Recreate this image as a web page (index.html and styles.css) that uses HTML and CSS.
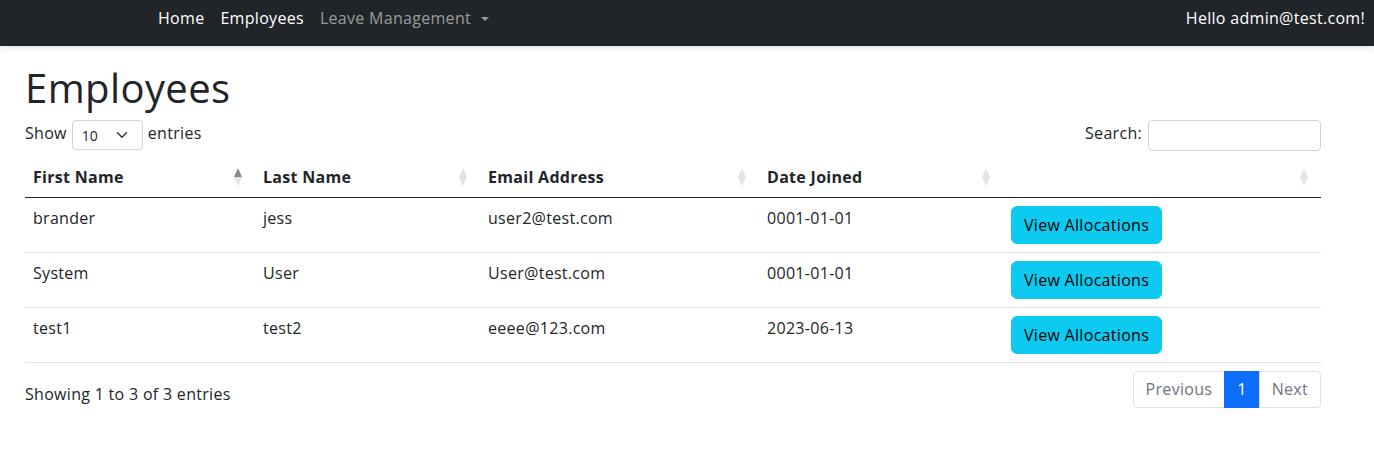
FILE: index.html
```html
<!DOCTYPE html>
<html lang="en">
<head>
<meta charset="utf-8">
<title>Employees</title>
<link rel="stylesheet" href="styles.css">
</head>
<body>
<header class="navbar">
  <nav class="nav-left">
    <a class="nav-link active" href="#">Home</a>
    <a class="nav-link active" href="#">Employees</a>
    <a class="nav-link muted" href="#">Leave Management <span class="caret"></span></a>
  </nav>
  <div class="greeting">Hello admin@test.com!</div>
</header>
<main class="container">
  <h1 class="title">Employees</h1>
  <div class="dt-top">
    <label class="dt-length"><span class="lbl">Show</span>
      <span class="select">10
        <svg class="chev" width="12" height="12" viewBox="0 0 16 16"><path d="M2 5l6 6 6-6" fill="none" stroke="#343a40" stroke-width="2" stroke-linecap="round" stroke-linejoin="round"/></svg>
      </span>
      <span class="lbl">entries</span></label>
    <label class="dt-search"><span class="lbl">Search:</span> <span class="search-input"></span></label>
  </div>
  <table class="table">
    <colgroup>
      <col style="width:230px"><col style="width:225px"><col style="width:279px"><col style="width:244px"><col style="width:318px">
    </colgroup>
    <thead>
      <tr>
        <th class="sorting asc">First Name</th>
        <th class="sorting">Last Name</th>
        <th class="sorting">Email Address</th>
        <th class="sorting">Date Joined</th>
        <th class="sorting"></th>
      </tr>
    </thead>
    <tbody>
      <tr><td>brander</td><td>jess</td><td>user2@test.com</td><td>0001-01-01</td><td><a class="btn-info" href="#">View Allocations</a></td></tr>
      <tr><td>System</td><td>User</td><td>User@test.com</td><td>0001-01-01</td><td><a class="btn-info" href="#">View Allocations</a></td></tr>
      <tr><td>test1</td><td>test2</td><td>eeee@123.com</td><td>2023-06-13</td><td><a class="btn-info" href="#">View Allocations</a></td></tr>
    </tbody>
  </table>
  <div class="dt-bottom">
    <div class="dt-info">Showing 1 to 3 of 3 entries</div>
    <ul class="pagination">
      <li class="page disabled">Previous</li>
      <li class="page current">1</li>
      <li class="page">Next</li>
    </ul>
  </div>
</main>
</body>
</html>
```
FILE: styles.css
```css
* { box-sizing: border-box; }
html, body { margin: 0; padding: 0; }
body {
  font-family: "Open Sans", "Noto Sans", sans-serif;
  font-size: 16px;
  line-height: 1.5;
  letter-spacing: 0.3px;
  color: #212529;
  background: #fff;
}
a { text-decoration: none; }

.navbar {
  height: 46px;
  background: #212529;
  display: flex;
  justify-content: space-between;
  align-items: flex-start;
  padding: 6px 9px 0 150px;
  box-shadow: 0 2px 6px rgba(0,0,0,0.12);
}
.nav-left { display: flex; }
.nav-link {
  padding: 0 8px;
  color: #fff;
  line-height: 24px;
}
.nav-link.muted { color: rgba(255,255,255,0.55); }
.caret {
  display: inline-block;
  margin-left: 6px;
  vertical-align: 3px;
  border-top: 4px solid rgba(255,255,255,0.55);
  border-left: 4px solid transparent;
  border-right: 4px solid transparent;
}
.greeting { color: #fff; line-height: 24px; }

.container {
  width: 1296px;
  margin-left: 25px;
  padding-top: 18px;
}
.title {
  margin: 0 0 8px;
  font-size: 40px;
  font-weight: 400;
  line-height: 1.2;
  letter-spacing: 0.4px;
}
.dt-top {
  display: flex;
  justify-content: space-between;
  align-items: flex-start;
  height: 31px;
}
.lbl { line-height: 24px; padding-top: 1px; }
.dt-length { display: flex; align-items: flex-start; gap: 5px; }
.select {
  display: inline-flex;
  align-items: center;
  justify-content: space-between;
  width: 71px;
  height: 30px;
  padding: 0 14px 0 9px;
  border: 1px solid #ced4da;
  border-radius: 4px;
  font-size: 14px;
  letter-spacing: 0;
}
.dt-search { display: flex; align-items: flex-start; gap: 6px; }
.search-input {
  width: 173px;
  height: 31px;
  border: 1px solid #ced4da;
  border-radius: 4px;
}

.table {
  width: 1296px;
  margin-top: 6px;
  border-collapse: collapse;
  table-layout: fixed;
}
.table th {
  text-align: left;
  font-weight: 700;
  padding: 8px 30px 8px 8px;
  border-bottom: 1px solid #212529;
  position: relative;
  height: 40px;
}
.table td {
  padding: 8px;
  vertical-align: top;
  border-bottom: 1px solid #dee2e6;
  height: 55px;
}
.sorting::before, .sorting::after {
  content: "";
  position: absolute;
  right: 13px;
  width: 0;
  height: 0;
  border-left: 4px solid transparent;
  border-right: 4px solid transparent;
}
.sorting::before { top: 11px; border-bottom: 9px solid #e3e3e3; }
.sorting::after { top: 20px; border-top: 9px solid #e3e3e3; }
.sorting.asc::before { border-bottom-color: #8a8a8a; }

.btn-info {
  display: inline-block;
  background: #0dcaf0;
  color: #000;
  padding: 6px 12px;
  border-radius: 6px;
  line-height: 24px;
  border: 1px solid #0dcaf0;
}

.dt-bottom {
  display: flex;
  justify-content: space-between;
  align-items: flex-start;
  padding-top: 8px;
}
.dt-info { padding-top: 11px; }
.pagination {
  display: flex;
  list-style: none;
  margin: 0;
  padding: 0;
}
.page {
  padding: 6px 12px;
  border: 1px solid #dee2e6;
  margin-left: -1px;
  color: #0d6efd;
  line-height: 23px;
}
.page:first-child { border-radius: 4px 0 0 4px; }
.page:last-child { border-radius: 0 4px 4px 0; color: #6c757d; }
.page.disabled { color: #6c757d; }
.page.current { background: #0d6efd; border-color: #0d6efd; color: #fff; }
```
